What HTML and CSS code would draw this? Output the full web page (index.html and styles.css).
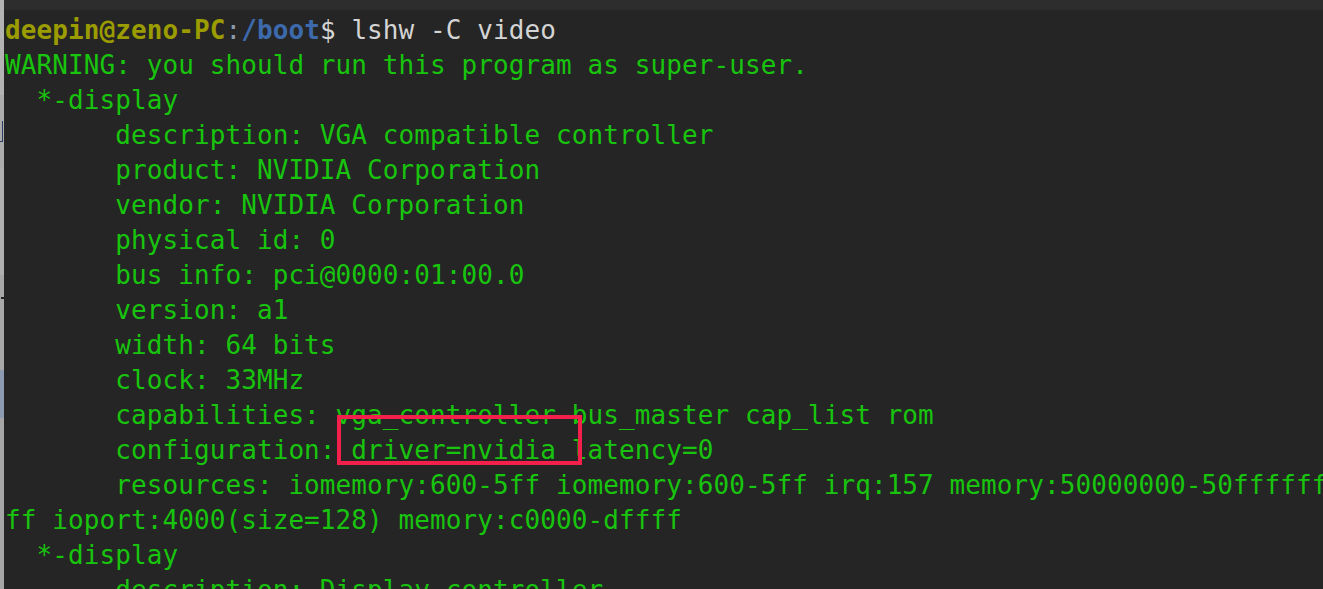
FILE: index.html
```html
<!DOCTYPE html>
<html>
<head>
<meta charset="utf-8">
<link rel="stylesheet" href="styles.css">
</head>
<body>
<div class="screen">
  <div class="side">
    <div class="seg s1"></div>
    <div class="seg s2"><span class="bracket"></span></div>
    <div class="seg s3"></div>
    <div class="seg s4"><span class="mark"></span></div>
    <div class="seg s5"></div>
    <div class="seg s6"></div>
  </div>
  <div class="main">
    <div class="topbar"></div>
    <div class="term">
      <div class="line"><span class="user">deepin@zeno-PC</span><span class="colon">:</span><span class="path">/boot</span><span class="cmd">$ lshw -C video</span></div>
      <div class="line">WARNING: you should run this program as super-user.</div>
      <div class="line">  *-display</div>
      <div class="line">       description: VGA compatible controller</div>
      <div class="line">       product: NVIDIA Corporation</div>
      <div class="line">       vendor: NVIDIA Corporation</div>
      <div class="line">       physical id: 0</div>
      <div class="line">       bus info: pci@0000:01:00.0</div>
      <div class="line">       version: a1</div>
      <div class="line">       width: 64 bits</div>
      <div class="line">       clock: 33MHz</div>
      <div class="line">       capabilities: vga_controller bus_master cap_list rom</div>
      <div class="line">       configuration: <span class="hl">driver=nvidia</span> latency=0</div>
      <div class="line">       resources: iomemory:600-5ff iomemory:600-5ff irq:157 memory:50000000-50ffffff</div>
      <div class="line">ff ioport:4000(size=128) memory:c0000-dffff</div>
      <div class="line">  *-display</div>
      <div class="line">       description: Display controller</div>
    </div>
  </div>
</div>
</body>
</html>
```
FILE: styles.css
```css
html, body {
  margin: 0;
  padding: 0;
  background: #252525;
  overflow: hidden;
}
.screen {
  display: flex;
  width: 1323px;
  height: 589px;
  overflow: hidden;
}
.side {
  width: 4px;
  flex: none;
  display: flex;
  flex-direction: column;
  background: #a9a9a9;
}
.seg { position: relative; }
.s1 { height: 95px; background: #b3b3b3; }
.s2 { height: 73px; background: #acacac; }
.s3 { height: 107px; background: #b0b0b0; }
.s4 { height: 95px; background: #a8a8a8; }
.s5 { height: 48px; background: #8d9bb2; }
.s6 { flex: 1; background: #a6a6a6; }
.bracket {
  position: absolute;
  left: 0;
  top: 26px;
  width: 2px;
  height: 20px;
  border-right: 1px solid #2b3f66;
  border-bottom: 1px solid #2b3f66;
}
.mark {
  position: absolute;
  left: 1px;
  top: 22px;
  width: 3px;
  height: 2px;
  background: #222;
}
.main {
  flex: 1;
  display: flex;
  flex-direction: column;
  min-width: 0;
}
.topbar {
  height: 10px;
  background: #2d2d2d;
  flex: none;
}
.term {
  padding: 3px 0 0 1px;
  font-family: "DejaVu Sans Mono", "Liberation Mono", monospace;
  font-size: 26px;
  line-height: 35px;
  letter-spacing: 0.09px;
  color: #18c40e;
  overflow: hidden;
}
.line {
  height: 35px;
  white-space: pre;
}
.user { color: #9b9c00; font-weight: bold; }
.colon { color: #8a9ab0; }
.path { color: #3d6aac; font-weight: bold; }
.cmd { color: #d4d4d4; }
.hl {
  position: relative;
}
.hl::after {
  content: "";
  position: absolute;
  left: -14px;
  right: -26px;
  top: -20px;
  height: 42px;
  border: 4px solid #f4204c;
  pointer-events: none;
}
```
